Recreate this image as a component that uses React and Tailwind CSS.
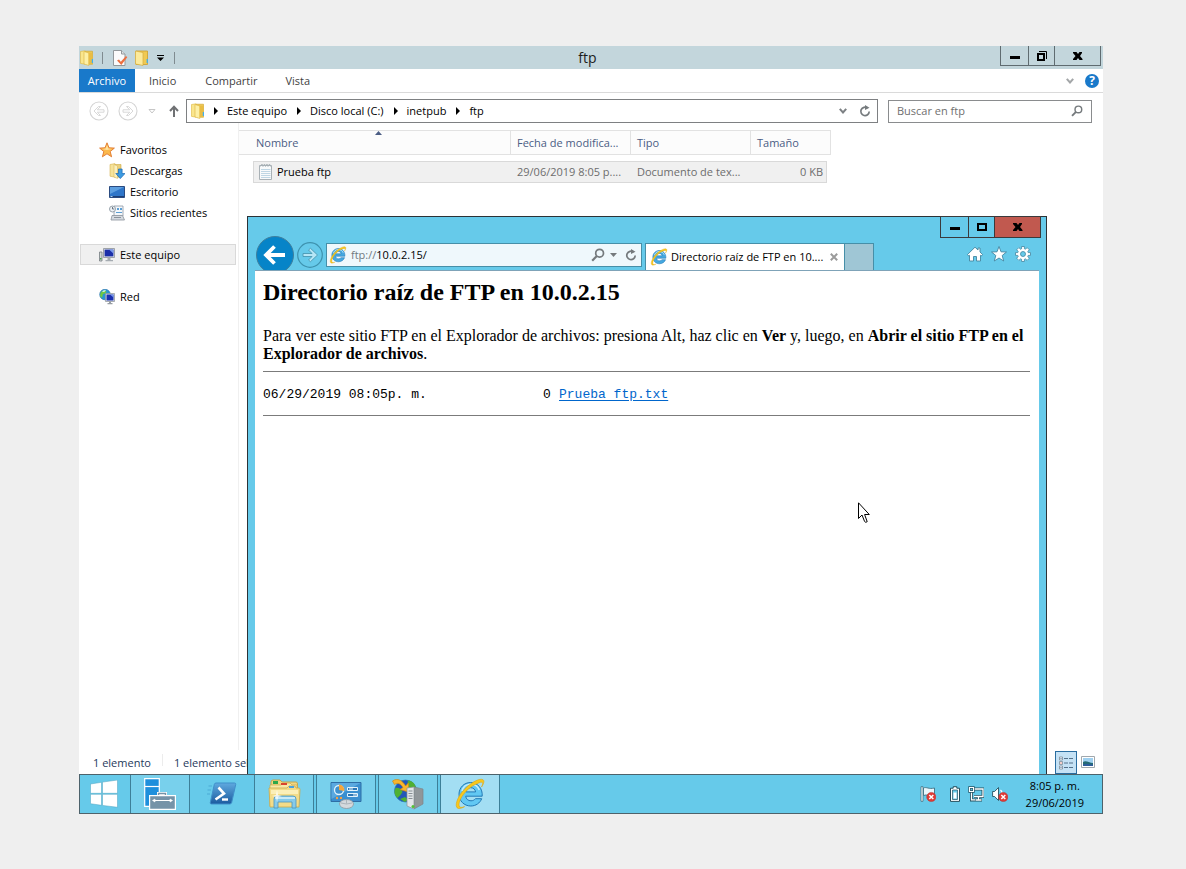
import React from "react";

function FolderIcon({ className = "h-4 w-4" }) {
  return (
    <svg viewBox="0 0 16 16" className={className} aria-hidden="true">
      <path d="M1.500 1.500 6 .8v13.400l-4.500-.8z" fill="#fae68c" stroke="#dfb73c" strokeWidth=".6" />
      <path d="M6 1.200h7.500v13H7z" fill="#eec650" stroke="#cfa42c" strokeWidth=".6" />
      <path d="M5 1.500 9.800 3v12.500L5 14z" fill="#fdf0a6" stroke="#dbb340" strokeWidth=".6" />
      <path d="M9.800 3h3.700v11.200H9.800z" fill="#e9bd45" />
      <path d="M12.800 9H14v4h-1.200z" fill="#3fb0ee" />
    </svg>
  );
}

function NewFolderIcon() {
  return (
    <svg viewBox="0 0 16 16" className="h-4 w-4" aria-hidden="true">
      <path d="M2 1h11.500v13.500H2z" fill="#f0c952" stroke="#cc9f2b" strokeWidth=".8" />
      <path d="M1.500 1 9 2.500v13L1.500 14z" fill="#fcea9a" stroke="#d6ac3c" strokeWidth=".7" />
      <path d="M12.600 9h1.300v4h-1.300z" fill="#3fb0ee" />
    </svg>
  );
}

function IEIcon({ className = "h-4 w-4", light = false }) {
  return (
    <svg viewBox="0 0 32 32" className={className} aria-hidden="true">
      <path
        d="M16.5 4.5C10 4.500 5 9.800 5 16.200 5 22.800 10 28 16.800 28c5 0 9.200-2.900 10.900-7.300h-6.300c-1 1.300-2.500 2.100-4.400 2.100-2.900 0-5-1.800-5.300-4.600h16.500c.6-7.600-4.400-13.700-11.700-13.700zM11.800 13.900c.5-2.600 2.400-4.200 4.900-4.200 2.600 0 4.500 1.600 4.900 4.200z"
        fill={light ? "#62c8f3" : "#45a8e0"}
        stroke="#2379b5"
        strokeWidth="1"
        fillRule="evenodd"
      />
      <path d="M8 13c1-4 4-6.500 8-6.800 4.500-.2 8 2.200 9.300 5.800" fill="none" stroke="#c4ecfb" strokeWidth="1.600" />
      <path
        d="M23.500 5.500c3.200-1.800 5.600-1.700 5.200.6-.2.900-.7 2-1.200 2.900 2.200-3.200 3.200-6 1.600-7.200C26.200-.3 18 3.800 11.200 10.500 4.500 17.200 1 25.500 2.600 29c1.100 2.400 4.500 1.700 8-.4-2.800 1.200-4.900 1.100-5.400-.5-1.200-3.400 2.400-10.600 8.200-16.200 3.500-3.300 7.200-5.300 10.100-6.400z"
        fill="#f8c81c"
        stroke="#dda411"
        strokeWidth=".6"
      />
    </svg>
  );
}

function StarIcon() {
  return (
    <svg viewBox="0 0 16 16" className="h-4 w-4" aria-hidden="true">
      <path d="m8 .8 2 5 5.400.3-4.200 3.400 1.400 5.300L8 11.800l-4.600 3 1.400-5.300L.6 6.100 6 5.800z" fill="#fbb94d" stroke="#e0762a" strokeWidth=".9" strokeLinejoin="round" />
      <path d="m8 3 1.300 3.600L13 7l-5 1-5-1 3.700-.4z" fill="#ffe2a0" />
    </svg>
  );
}

function DownloadsIcon() {
  return (
    <svg viewBox="0 0 16 16" className="h-4 w-4" aria-hidden="true">
      <path d="M1 1.500 6 .6v13.600l-5-1z" fill="#f6e39a" stroke="#d7b352" strokeWidth=".6" />
      <path d="M6 1.500h6v12.700H6z" fill="#ecd07a" stroke="#cda946" strokeWidth=".6" />
      <path d="M5 1.500 8.500 3v12.500L5 14z" fill="#fbf0bd" stroke="#d7b352" strokeWidth=".5" />
      <path d="M9.500 6h3.600v4.500H16L11.300 15.600 6.800 10.500h2.700z" fill="#3c9be2" stroke="#1b69b3" strokeWidth=".7" />
    </svg>
  );
}

function DesktopIcon() {
  return (
    <svg viewBox="0 0 16 16" className="h-4 w-4" aria-hidden="true">
      <path d="M.5 2.500h15v11H.5z" fill="#2f76c9" stroke="#2b4b80" />
      <path d="M1 3h14L1 10z" fill="#5d9fe0" />
      <path d="M1 12h14v1H1z" fill="#1d3f75" />
      <path d="M1.500 12h2v1h-2z" fill="#a9d1f5" />
    </svg>
  );
}

function RecentIcon() {
  return (
    <svg viewBox="0 0 16 16" className="h-4 w-4" aria-hidden="true">
      <path d="M5 1h9v10H5z" fill="#f4f7fa" stroke="#8d98a3" strokeWidth=".8" />
      <path d="M8 3h2v2H8zM11 3h2v2h-2zM7 7h6v1H7z" fill="#5c9fd4" />
      <path d="M3 10.500h10.500l2 4.500H2z" fill="#d5dae0" stroke="#8b939c" strokeWidth=".8" />
      <path d="M5 12h7v1H5z" fill="#8b939c" />
      <circle cx="3.500" cy="4" r="3" fill="#edf1f5" stroke="#8d98a3" strokeWidth=".9" />
      <path d="M3.500 2v2h1.700" fill="none" stroke="#4e5c69" strokeWidth=".8" />
    </svg>
  );
}

function ComputerIcon() {
  return (
    <svg viewBox="0 0 16 16" className="h-4 w-4" aria-hidden="true">
      <path d="M.5 5h2.500v9H.5z" fill="#d3d9d5" stroke="#737b80" strokeWidth=".8" />
      <path d="M1 11h1.500v1.500H1z" fill="#43a047" />
      <path d="M4.500 1.500h11v9h-11z" fill="#dfe3e8" stroke="#8b9097" strokeWidth=".8" />
      <path d="M5.600 2.600h8.800v6.800H5.600z" fill="#1b2fa8" />
      <path d="M10 2.600h4.400v4z" fill="#7d9ceb" />
      <path d="M8.500 10.500h3V13H14v1.300H6.500V13h2z" fill="#a5abb1" />
    </svg>
  );
}

function NetworkIcon() {
  return (
    <svg viewBox="0 0 16 16" className="h-4 w-4" aria-hidden="true">
      <circle cx="6" cy="5.500" r="5.300" fill="#2795d6" stroke="#1a68a3" strokeWidth=".6" />
      <path d="M1.500 4c2-3 5-3 6-1L6 4.500 4 5 3 9 1 7z" fill="#6fc943" />
      <path d="M3 2.500C4 1.500 6 1 7 1.500L5 3z" fill="#d6f4fa" />
      <path d="M6.500 4.500h9v8h-9z" fill="#e1e6ea" stroke="#8b9097" strokeWidth=".7" />
      <path d="M7.500 5.500h7v6h-7z" fill="#1a30b0" />
      <path d="M11 5.500h3.500v3z" fill="#7897ea" />
      <path d="M10 12.500h2V14h1.500v1.200h-5V14H10z" fill="#979da3" />
    </svg>
  );
}

function NotepadIcon() {
  return (
    <svg viewBox="0 0 16 18" className="h-[18px] w-4" aria-hidden="true">
      <path d="M1.500 2.500h12v14h-12z" fill="#f8fafb" stroke="#a9b1b6" />
      <path d="M3 6.500h9.500M3 8.500h9.500M3 10.500h9.500M3 12.500h9.500M3 14.500h9.500" stroke="#bfd6e4" />
      <path d="M2.500 3.500 4 1l1 2.500L6.500 1l1 2.500L9 1l1 2.500L11.500 1l1 2.500" fill="none" stroke="#a3acb1" strokeWidth=".8" />
    </svg>
  );
}

function MagnifierIcon({ className = "h-3 w-3" }) {
  return (
    <svg viewBox="0 0 14 14" className={className} fill="none" stroke="#757a7d" aria-hidden="true">
      <circle cx="8.600" cy="5.200" r="3.900" strokeWidth="1.700" />
      <path d="M5.800 8 1.200 12.700" strokeWidth="2.200" />
    </svg>
  );
}

function ReloadIcon({ className = "h-3 w-3" }) {
  return (
    <svg viewBox="0 0 12 12" className={className} aria-hidden="true">
      <path d="M8.500 3A4.200 4.200 0 1 0 10.200 6.500" fill="none" stroke="#757a7d" strokeWidth="1.700" />
      <path d="M6 0v5l4.500-2.200z" fill="#757a7d" />
    </svg>
  );
}

function ChevronIcon() {
  return (
    <svg viewBox="0 0 8 6" className="h-[6px] w-2" aria-hidden="true">
      <path d="m.8.800 3.200 3.700L7.200.8" fill="none" stroke="#7d8184" strokeWidth="2" />
    </svg>
  );
}

function CrumbArrow() {
  return (
    <svg viewBox="0 0 4 8" className="h-2 w-1 shrink-0" aria-hidden="true">
      <path d="M0 0v8l4-4z" fill="#000" />
    </svg>
  );
}

function NavCircle({ flip = false }) {
  return (
    <svg viewBox="0 0 20 20" className={flip ? "h-5 w-5 rotate-180" : "h-5 w-5"} fill="none" stroke="#d4d4d4" aria-hidden="true">
      <circle cx="10" cy="10" r="9" strokeWidth="1.100" />
      <path d="M5 10l4.500-4.500h2L8.300 8.800H15v2.400H8.300l3.200 3.300h-2z" strokeWidth=".9" />
    </svg>
  );
}

function MinimizeGlyph() {
  return (
    <svg viewBox="0 0 10 10" className="h-[10px] w-[10px]" aria-hidden="true">
      <path d="M0 5h10v3H0z" fill="#000" />
    </svg>
  );
}

function MaximizeGlyph() {
  return (
    <svg viewBox="0 0 10 8" className="h-2 w-[10px]" aria-hidden="true">
      <path d="M1 1h8v6H1z" fill="none" stroke="#000" strokeWidth="2" />
    </svg>
  );
}

function RestoreGlyph() {
  return (
    <svg viewBox="0 0 10 10" className="h-[10px] w-[10px]" aria-hidden="true">
      <path d="M1 3h6v6H1z" fill="none" stroke="#000" strokeWidth="2" />
      <path d="M2 .5h7.500V8" fill="none" stroke="#000" />
    </svg>
  );
}

function CloseGlyph() {
  return (
    <svg viewBox="0 0 10 8" className="h-2 w-[10px]" aria-hidden="true">
      <path d="M0 0h3.500L5 2 6.500 0H9v1L7 4l2.500 3v1H6.500L5 6 3.500 8H0V7l2.500-3L0 1z" fill="#000" />
    </svg>
  );
}

function ExplorerTitleBar() {
  return (
    <header className="flex h-[23px] bg-[#c3d6dc]">
      <div className="flex w-24 items-center">
        <FolderIcon />
        <span className="ml-[7px] h-3 w-px bg-[#7f8b90]" />
        <button aria-label="Propiedades" className="ml-[9px]">
          <svg viewBox="0 0 16 16" className="h-4 w-4" aria-hidden="true">
            <path d="M1.500.5h8l3.500 3.500v11.500H1.500z" fill="#fbfbfb" stroke="#93999c" />
            <path d="M9.500.5V4H13" fill="#e0e4e6" stroke="#93999c" />
            <path d="m5 10.500 2-1 1.800 2.300L14 6l1.300 1.200L9.300 15z" fill="#ed7040" />
          </svg>
        </button>
        <button aria-label="Nueva carpeta" className="ml-[6px]"><NewFolderIcon /></button>
        <button aria-label="Personalizar barra" className="ml-[7px]">
          <svg viewBox="0 0 7 6" className="h-[6px] w-[7px]" aria-hidden="true">
            <path d="M0 0h7v1H0zM0 2.500h7L3.500 6z" fill="#000" />
          </svg>
        </button>
        <span className="ml-[10px] h-3 w-px shrink-0 bg-[#7f8b90]" />
      </div>
      <h1 className="flex-1 text-center text-[14px] leading-[23px] text-[#1c1c1c]">ftp</h1>
      <div className="mr-[2px] flex h-5 border border-t-0 border-[#5f6b70]">
        <button aria-label="Minimizar" className="flex w-[27px] items-center justify-center"><MinimizeGlyph /></button>
        <button aria-label="Restaurar" className="flex w-[26px] items-center justify-center border-l border-[#5f6b70]"><RestoreGlyph /></button>
        <button aria-label="Cerrar" className="flex w-[46px] items-center justify-center border-l border-[#5f6b70]"><CloseGlyph /></button>
      </div>
    </header>
  );
}

function Ribbon() {
  return (
    <nav className="flex h-6 items-center border-b border-[#dadada] text-[#3f3f3f]">
      <button className="h-[23px] w-14 bg-[#1979ca] text-white">Archivo</button>
      <button className="ml-[14px]">Inicio</button>
      <button className="ml-[29px]">Compartir</button>
      <button className="ml-7">Vista</button>
      <button aria-label="Expandir cinta" className="ml-auto opacity-70"><ChevronIcon /></button>
      <button aria-label="Ayuda" className="mr-1 ml-[11px] h-[14px] w-[14px] rounded-full bg-[#1979ca] text-[12px] leading-[14px] font-bold text-white">?</button>
    </nav>
  );
}

const crumbs = ["Este equipo", "Disco local (C:)", "inetpub", "ftp"];

function AddressRow() {
  return (
    <div className="flex items-center pt-[6px] pr-[11px] pl-[10px]">
      <button aria-label="Atrás"><NavCircle /></button>
      <button aria-label="Adelante" className="ml-[9px]"><NavCircle flip /></button>
      <button aria-label="Ubicaciones recientes" className="ml-[10px]">
        <svg viewBox="0 0 8 5" className="h-[5px] w-2" aria-hidden="true"><path d="M1 .5h6L4 4z" fill="#fff" stroke="#c6c6c6" /></svg>
      </button>
      <button aria-label="Subir" className="ml-[13px]">
        <svg viewBox="0 0 10 12" className="h-3 w-[10px]" aria-hidden="true"><path d="M5 12V2M1 6l4-4.300L9 6" fill="none" stroke="#6f7173" strokeWidth="2" /></svg>
      </button>
      <div className="ml-[7px] flex h-6 min-w-0 flex-1 items-center border border-[#7e8082] pr-[6px] pl-[3px]">
        <FolderIcon />
        <ol className="ml-2 flex flex-1 items-center gap-[10px] text-black">
          {crumbs.map((crumb) => (
            <li key={crumb} className="flex items-center gap-[9px]">
              <CrumbArrow />
              <a href="#">{crumb}</a>
            </li>
          ))}
        </ol>
        <button aria-label="Historial"><ChevronIcon /></button>
        <button aria-label="Actualizar" className="ml-3"><ReloadIcon /></button>
      </div>
      <label className="ml-[10px] flex h-[23px] w-[204px] items-center border border-[#8a8c8e] px-2">
        <input type="search" aria-label="Buscar en ftp" placeholder="Buscar en ftp" className="min-w-0 flex-1 bg-transparent placeholder-[#707070] outline-none" />
        <MagnifierIcon />
      </label>
    </div>
  );
}

function TreeItem({ icon, label, child = false, selected = false }) {
  return (
    <a
      href="#"
      className={`mr-[2px] ml-px flex h-[21px] items-center gap-[5px] border ${child ? "pl-7" : "pl-[18px]"} ${selected ? "border-[#d9d9d9] bg-[#f0f0f0]" : "border-transparent"}`}
    >
      {icon}
      {label}
    </a>
  );
}

function Sidebar() {
  return (
    <aside className="flex w-40 shrink-0 flex-col gap-[21px] border-r border-[#f0f0f0] pt-4 text-black">
      <div>
        <TreeItem icon={<StarIcon />} label="Favoritos" />
        <TreeItem icon={<DownloadsIcon />} label="Descargas" child />
        <TreeItem icon={<DesktopIcon />} label="Escritorio" child />
        <TreeItem icon={<RecentIcon />} label="Sitios recientes" child />
      </div>
      <TreeItem icon={<ComputerIcon />} label="Este equipo" selected />
      <TreeItem icon={<NetworkIcon />} label="Red" />
    </aside>
  );
}

function FileTable() {
  return (
    <table className="mt-[7px] w-[592px] table-fixed border-separate border-spacing-0 self-start text-left">
      <colgroup>
        <col className="w-[14px]" />
        <col className="w-[258px]" />
        <col className="w-[120px]" />
        <col className="w-[120px]" />
        <col className="w-[76px]" />
        <col className="w-1" />
      </colgroup>
      <thead className="bg-[#fcfcfc] text-[#4b5d84]">
        <tr className="h-[25px]">
          <th colSpan={2} className="relative border-y border-r border-[#e2e2e2] pl-[17px] font-normal">
            Nombre
            <svg viewBox="0 0 7 4" className="absolute top-0 left-1/2 h-1 w-[7px]" aria-hidden="true"><path d="M0 4h7L3.500 0z" fill="#4b5d84" /></svg>
          </th>
          <th className="truncate border-y border-r border-[#e2e2e2] px-[6px] font-normal">Fecha de modifica...</th>
          <th className="border-y border-r border-[#e2e2e2] pl-[6px] font-normal">Tipo</th>
          <th colSpan={2} className="border-y border-r border-[#e2e2e2] pl-[6px] font-normal">Tamaño</th>
        </tr>
      </thead>
      <tbody className="text-[#6d6d6d] before:block before:h-[6px] before:content-['']">
        <tr className="h-[22px]">
          <td />
          <td className="border-y border-l border-[#d9d9d9] bg-[#f0f0f0] pl-1 text-black">
            <span className="flex items-center gap-[3px]"><NotepadIcon />Prueba ftp</span>
          </td>
          <td className="border-y border-[#d9d9d9] bg-[#f0f0f0] pl-[6px] whitespace-nowrap">29/06/2019 8:05 p....</td>
          <td className="border-y border-[#d9d9d9] bg-[#f0f0f0] pl-[6px] whitespace-nowrap">Documento de tex...</td>
          <td className="border-y border-r border-[#d9d9d9] bg-[#f0f0f0] pr-[3px] text-right">0 KB</td>
          <td />
        </tr>
      </tbody>
    </table>
  );
}

function StatusBar() {
  return (
    <footer className="flex h-6 items-end pl-[14px] text-[#1e395b]">
      <span className="leading-[22px]">1 elemento</span>
      <span className="mx-[11px] mb-2 h-3 w-px bg-[#ececec]" />
      <span className="leading-[22px]">1 elemento seleccionado</span>
      <button aria-label="Vista de detalles" className="ml-auto flex h-[23px] w-[22px] items-center justify-center border border-[#2a6da0] bg-[#c5e2f5]">
        <svg viewBox="0 0 16 14" className="h-[14px] w-4" aria-hidden="true">
          <path d="M1.500 1h3v3h-3zM1.500 5.500h3v3h-3zM1.500 10h3v3h-3z" fill="#fff" stroke="#7c8a95" strokeWidth=".8" />
          <path d="M2.500 2h1v1h-1zM2.500 11h1v1h-1z" fill="#3f6ba0" />
          <path d="M2.500 6.500h1v1h-1z" fill="#d03a2b" />
          <path d="M6 2.500h4M11 2.500h4M6 7h4M11 7h4M6 11.500h4M11 11.500h4" stroke="#55718a" />
        </svg>
      </button>
      <button aria-label="Vista de iconos" className="mr-2 ml-1 flex h-6 items-center">
        <svg viewBox="0 0 14 12" className="h-3 w-[14px]" aria-hidden="true">
          <path d="M.5.500h13v11H.5z" fill="#fff" stroke="#a1a8ad" />
          <path d="M2 2h10v8H2z" fill="#9fd0f0" />
          <path d="M2 6c3-2 6 1 10 1v3H2z" fill="#246a74" />
          <path d="M2 8.500c4-1 7 0 10 0V10H2z" fill="#2e5d9b" />
        </svg>
      </button>
    </footer>
  );
}

function BrowserWindow() {
  return (
    <section aria-label="Internet Explorer" className="absolute top-[170px] right-14 bottom-10 left-[168px] flex flex-col border border-b-0 border-[#2b3236] bg-[#66caea] px-[7px]">
      <div className="-mt-px -mr-[2px] flex h-[22px] self-end border border-[#3a3a3c]">
        <button aria-label="Minimizar" className="flex w-[27px] items-center justify-center"><MinimizeGlyph /></button>
        <button aria-label="Maximizar" className="flex w-[26px] items-center justify-center border-l border-[#3a3a3c]"><MaximizeGlyph /></button>
        <button aria-label="Cerrar" className="flex w-[46px] items-center justify-center border-l border-[#3a3a3c] bg-[#c1594f]"><CloseGlyph /></button>
      </div>
      <div className="flex h-8 shrink-0 items-end">
        <button aria-label="Atrás">
          <svg viewBox="0 0 40 34" className="h-[34px] w-10" aria-hidden="true">
            <circle cx="20" cy="19" r="18.500" fill="#0684c8" stroke="#3f7f9d" />
            <path d="M30 19H12M19.500 10.500 11 19l8.500 8.500" fill="none" stroke="#fff" strokeWidth="3.800" />
          </svg>
        </button>
        <button aria-label="Adelante" className="mb-[2px] ml-[2px]">
          <svg viewBox="0 0 26 26" className="h-[26px] w-[26px]" aria-hidden="true">
            <circle cx="13" cy="13" r="12.300" fill="none" stroke="#3e92ae" strokeWidth="1.200" />
            <path d="M6 11.500h9L11.500 8l2-1.700 7 6.700-7 6.700-2-1.700 3.500-3.500H6z" fill="#b5e6f6" stroke="#4a98b2" strokeWidth=".9" />
          </svg>
        </button>
        <div className="mb-[3px] ml-[3px] flex h-6 w-[316px] items-center border border-[#468fa8] bg-[#eff8fc] pr-1 pl-[2px]">
          <IEIcon className="h-[18px] w-[18px]" />
          <label htmlFor="direccion" className="ml-1 text-[#6f7a80]">ftp://</label>
          <input id="direccion" type="text" defaultValue="10.0.2.15/" className="min-w-0 flex-1 bg-transparent text-black outline-none" />
          <button aria-label="Buscar"><MagnifierIcon className="h-[14px] w-[14px]" /></button>
          <button aria-label="Opciones de búsqueda" className="ml-[5px]">
            <svg viewBox="0 0 7 4" className="h-1 w-[7px]" aria-hidden="true"><path d="M0 0h7L3.500 4z" fill="#757a7d" /></svg>
          </button>
          <button aria-label="Actualizar" className="ml-2"><ReloadIcon /></button>
        </div>
        <div className="ml-[3px] flex h-[27px] w-[200px] items-center border border-b-0 border-[#468fa8] bg-white pr-[6px] pl-[4px]">
          <IEIcon className="h-[18px] w-[18px] shrink-0" />
          <span className="ml-[3px] flex-1 whitespace-nowrap text-black">Directorio raíz de FTP en 10....</span>
          <button aria-label="Cerrar pestaña">
            <svg viewBox="0 0 8 8" className="h-2 w-2" aria-hidden="true"><path d="m.8.800 6.400 6.400M7.200.8.800 7.200" stroke="#9b9b9b" strokeWidth="2" /></svg>
          </button>
        </div>
        <button aria-label="Nueva pestaña" className="h-[27px] w-[29px] border border-b-0 border-l-0 border-[#468fa8] bg-[#9fc6d5]" />
        <div className="mr-2 mb-2 ml-auto flex gap-2">
          <button aria-label="Inicio">
            <svg viewBox="0 0 16 16" className="h-4 w-4" aria-hidden="true">
              <path d="M8 1.200 11 4V2h2v4l2.500 2.500L14.300 10l-.8-.7V15h-4v-4.500h-3V15h-4V9.300l-.8.700L.5 8.500z" fill="#fff" stroke="#4486a0" strokeWidth=".9" />
            </svg>
          </button>
          <button aria-label="Favoritos">
            <svg viewBox="0 0 16 16" className="h-4 w-4" aria-hidden="true">
              <path d="m8 .500 2 5.300 5.500.2-4.300 3.500 1.500 5.500L8 12l-4.700 3 1.500-5.500L.5 6l5.500-.2z" fill="#fff" stroke="#4486a0" strokeWidth=".9" />
            </svg>
          </button>
          <button aria-label="Herramientas">
            <svg viewBox="0 0 16 16" className="h-4 w-4" aria-hidden="true">
              <path fillRule="evenodd" d="M6.600.5h2.800v2.200l1.100.5L12.100 1.600l2.200 2.200-1.500 1.700.4 1.100h2.300v2.800h-2.300l-.4 1.100 1.500 1.700-2.200 2.200-1.600-1.500-1.100.4v2.200H6.600v-2.200l-1.100-.4-1.600 1.500-2.200-2.200 1.500-1.700-.4-1.100H.5V6.600h2.300l.4-1.100-1.500-1.700 2.200-2.200 1.600 1.600 1.100-.5zM8 5.500a2.500 2.500 0 1 0 0 5 2.500 2.500 0 0 0 0-5z" fill="#fff" stroke="#4486a0" strokeWidth=".8" />
            </svg>
          </button>
        </div>
      </div>
      <article className="flex-1 border-t border-[#7fa3b8] bg-white px-2 font-['Liberation_Serif',serif] text-[16px] leading-[18px] text-black">
        <h2 className="pt-[7px] text-[24px] leading-7 font-bold">Directorio raíz de FTP en 10.0.2.15</h2>
        <p className="mt-[21px]">
          Para ver este sitio FTP en el Explorador de archivos: presiona Alt, haz clic en <b>Ver</b> y, luego, en <b>Abrir el sitio FTP en el Explorador de archivos</b>.
        </p>
        <hr className="mt-2 mr-px border-[#7b7b7b]" />
        <div className="flex pt-[14px] pb-3 font-['Liberation_Mono',monospace] text-[13px] leading-[17px]">
          <span className="w-[280px]">06/29/2019 08:05p. m.</span>
          <span className="w-4">0</span>
          <a href="#" className="text-[#0066cc] underline underline-offset-2">Prueba ftp.txt</a>
        </div>
        <hr className="mr-px border-[#7b7b7b]" />
      </article>
    </section>
  );
}

function ServerManagerIcon() {
  return (
    <svg viewBox="0 0 32 32" className="h-8 w-8" aria-hidden="true">
      <path d="M.7.700h14.600v27.600H.7z" fill="#1e8fdc" stroke="#fff" strokeWidth="1.200" />
      <path d="M1 8.500h14" stroke="#fff" strokeWidth="1.200" />
      <path d="M14.500 17.500v-2h7v2" fill="none" stroke="#fff" strokeWidth="3" />
      <path d="M14.500 17.500v-2h7v2" fill="none" stroke="#7593a8" strokeWidth="1.400" />
      <path d="M5.600 17.600h25.800v13.800H5.600z" fill="#7593a8" stroke="#fff" strokeWidth="1.200" />
      <path d="M9 22.500h19" stroke="#fff" />
      <path d="M8.500 22.500 11 21v3zM28.500 22.500 26 21v3z" fill="#fff" stroke="#fff" strokeWidth=".6" />
    </svg>
  );
}

function PowerShellIcon() {
  return (
    <svg viewBox="0 0 32 26" className="h-[26px] w-8" aria-hidden="true">
      <defs>
        <linearGradient id="psFill" x1="0" y1="0" x2="0" y2="1">
          <stop offset="0" stopColor="#5fa9df" />
          <stop offset="1" stopColor="#1b5b9f" />
        </linearGradient>
      </defs>
      <path d="M6 5H2.500M5 9H1.500M4 13H1" stroke="#4baad5" />
      <path d="M10 2h18.500q1.500 0 1.200 1.500l-4 18q-.4 1.500-2 1.500H5.500q-1.500 0-1.200-1.500l4-18Q8.600 2 10 2z" fill="url(#psFill)" stroke="#3f8fca" />
      <path d="m12.500 6.500 5.500 6-8.500 6" fill="none" stroke="#fff" strokeWidth="2.600" />
      <path d="M16 18.500h6" stroke="#fff" strokeWidth="2.400" />
    </svg>
  );
}

function FileExplorerIcon() {
  return (
    <svg viewBox="0 0 34 30" className="h-[30px] w-[34px]" aria-hidden="true">
      <path d="M4 3q0-2 2-2h7l2 2h14q1.500 0 1.500 2v21H4z" fill="#f0d681" stroke="#c4a54b" />
      <path d="M6 2h5v3H6z" fill="#2ba84a" />
      <path d="M3 6h11l2-2h7l2 2h5v21H3z" fill="#f8e9a8" stroke="#cdae55" strokeWidth=".8" />
      <path d="M14 4h6v2h-6z" fill="#d9442f" />
      <path d="M2 9h18l2-2h6l1 2h3q1 0 1 1.500L32 28H3z" fill="#f3dc88" stroke="#c9a94d" strokeWidth=".8" />
      <path d="M22 7h5v2h-5z" fill="#4aa2de" />
      <path d="M4 11h27v4H4z" fill="#fbefb8" />
      <path d="M7 29V20q0-3 3-3h16q3 0 3 3v9h-4v-6H11v6z" fill="#86cbea" stroke="#4b94bd" strokeWidth=".8" />
      <path d="M8 19h20" stroke="#dff5fd" strokeWidth="1.500" />
      <path d="m10 11 1 5 4 1-4 1-1 5-1-5-4-1 4-1z" fill="#fff" opacity=".8" />
    </svg>
  );
}

function ControlPanelIcon() {
  return (
    <svg viewBox="0 0 34 30" className="h-[30px] w-[34px]" aria-hidden="true">
      <path d="M2 3.500h30v19H2z" fill="#3a8fd0" stroke="#2f6ea5" />
      <path d="M2.500 4h29L2.500 20z" fill="#5aa9e0" />
      <circle cx="10" cy="11" r="4.500" fill="#3f92cf" stroke="#e3f4fd" strokeWidth="1.300" />
      <path d="M10 11V5.500A5.500 5.500 0 0 1 15.200 12z" fill="#f5a53a" />
      <path d="M18.500 8.500h10v3h-10zM18.500 14.500h10v3h-10z" fill="#2c76b5" stroke="#e3f4fd" />
      <path d="M20 9.500h4v1h-4zM24 15.500h4v1h-4z" fill="#e3f4fd" />
      <circle cx="8" cy="19" r="1.200" fill="#f7a142" />
      <circle cx="12" cy="19" r="1.200" fill="#f7a142" />
      <ellipse cx="17.500" cy="25" rx="7" ry="4.500" fill="#d4d9dd" stroke="#8e989f" strokeWidth=".8" />
      <path d="M17.500 20.500v4M12 24q5.500 2 11 0" fill="none" stroke="#9ba4ab" strokeWidth=".7" />
    </svg>
  );
}

function IISIcon() {
  return (
    <svg viewBox="0 0 34 34" className="h-[34px] w-[34px]" aria-hidden="true">
      <circle cx="14.500" cy="14" r="11" fill="#2257b8" stroke="#2e7fb9" strokeWidth=".7" />
      <path d="M4.500 11c3-1 6 1 7 4l-2 3-3 3C3 18 3 14 4.500 11zM17 3.500c4 0 7 3 8 7l-5 2-4-3zM9 22l5-2 3 3-3 2z" fill="#4fb033" />
      <path d="M1.500 4c5-3.500 10-.5 13 5l3-3v9l-8.500-2.500 3-2C10 7 7 5 3.500 7.500z" fill="#f8b62d" stroke="#d18a15" strokeWidth=".7" />
      <path d="m23 10 9 2v15l-9 5z" fill="#909699" stroke="#7d8589" strokeWidth=".7" />
      <path d="m16 11 7-1v22l-7-3z" fill="#e3e6e8" stroke="#8b9296" strokeWidth=".7" />
      <path d="M17.500 14h4M17.500 16.500h4M17.500 19h4M17.500 21.500h4" stroke="#888f94" strokeWidth="1.200" />
      <circle cx="22" cy="29.500" r="1.500" fill="#4fc531" />
    </svg>
  );
}

function TaskButton({ label, children, tone }) {
  return (
    <button aria-label={label} className={`flex w-[60px] items-center justify-center border-x border-[#3d7f98] ${tone}`}>
      {children}
    </button>
  );
}

function ErrorBadge() {
  return (
    <g>
      <circle cx="11.300" cy="11" r="4.600" fill="#e03a35" stroke="#b7332f" strokeWidth=".5" />
      <path d="m9.300 9 4 4m0-4-4 4" stroke="#fff" strokeWidth="1.500" />
    </g>
  );
}

function Taskbar() {
  return (
    <footer className="flex h-10 shrink-0 border border-[#4d626b] bg-[#66caea]">
      <button aria-label="Inicio" className="flex w-[50px] items-center justify-center pr-[2px]">
        <svg viewBox="0 0 28 28" className="h-7 w-7" aria-hidden="true">
          <path d="M.5 4 11.500 2.300v11H.5zM12.500 2.100 27.500 0v13.300h-15zM.5 14.300h11v11L.5 23.700zM12.500 14.300h15v13L12.500 25.400z" fill="#fff" stroke="#4ba2c0" strokeWidth=".5" />
        </svg>
      </button>
      <TaskButton label="Administrador del servidor" tone="bg-[#78d0ec]"><ServerManagerIcon /></TaskButton>
      <button aria-label="PowerShell" className="flex w-16 items-center justify-center"><PowerShellIcon /></button>
      <div className="flex gap-[2px]">
        <TaskButton label="Explorador de archivos" tone="bg-[#78d0ec]"><FileExplorerIcon /></TaskButton>
        <TaskButton label="Panel de control" tone="bg-[#78d0ec]"><ControlPanelIcon /></TaskButton>
        <TaskButton label="Administrador de IIS" tone="bg-[#78d0ec]"><IISIcon /></TaskButton>
        <TaskButton label="Internet Explorer" tone="bg-[#a3def3]"><IEIcon className="h-8 w-8" light /></TaskButton>
      </div>
      <div className="ml-auto flex items-center">
        <svg viewBox="0 0 16 16" className="h-4 w-4" aria-hidden="true">
          <path d="M1 .700h2v14.600H1z" fill="#fff" stroke="#3f6f82" strokeWidth=".8" />
          <path d="M3.500 2c3-1.500 5 1.500 11 0v7c-5 1.500-8-1-11 .500z" fill="#eaf7fc" stroke="#3f6f82" strokeWidth=".9" />
          <ErrorBadge />
        </svg>
        <svg viewBox="0 0 10 16" className="ml-[14px] h-4 w-[10px]" aria-hidden="true">
          <path d="M3.200.700h3.600v1.500h2.700v13.200H.5V2.200h2.700z" fill="#fff" stroke="#24505f" />
          <path d="M2.500 4h5v9.500h-5z" fill="#66caea" stroke="#24505f" strokeWidth=".7" />
          <path d="M3.500 6.500h3v6h-3z" fill="#fff" />
        </svg>
        <svg viewBox="0 0 16 16" className="ml-2 h-4 w-4" fill="none" aria-hidden="true">
          <path d="M6 3h9v7.500H6M10.500 11v3M7 14h7M3.500 6v8H7" stroke="#24505f" strokeWidth="3" />
          <path d="M6 3h9v7.500H6M10.500 11v3M7.500 14h6M3.500 6v7.800H7" stroke="#fff" strokeWidth="1.300" />
          <path d="M1.500 1.500h4v4h-4z" fill="#66caea" stroke="#24505f" strokeWidth="2.400" />
          <path d="M1.500 1.500h4v4h-4z" stroke="#fff" strokeWidth="1.100" />
        </svg>
        <svg viewBox="0 0 16 16" className="ml-2 h-4 w-4" aria-hidden="true">
          <path d="M.6 5.500h2L6.500 1.500v13l-3.900-4h-2z" fill="#fff" stroke="#24505f" strokeWidth=".9" />
          <path d="M8.500 4q1.500 1.200 1.500 3" fill="none" stroke="#fff" strokeWidth="1.200" />
          <ErrorBadge />
        </svg>
        <time className="mr-[18px] ml-[18px] text-center leading-[17px] text-black" dateTime="2019-06-29T20:05">
          8:05 p. m.<br />29/06/2019
        </time>
      </div>
    </footer>
  );
}

export default function App() {
  return (
    <main className="flex min-h-screen flex-col bg-[#efefef] pt-[46px] pr-[83px] pb-[55px] pl-[79px] font-['Open_Sans','Noto_Sans',sans-serif] text-[11px] leading-4">
      <div className="relative flex flex-1 flex-col overflow-hidden bg-white">
        <section aria-label="Explorador de archivos" className="flex flex-1 flex-col">
          <ExplorerTitleBar />
          <Ribbon />
          <AddressRow />
          <div className="flex flex-1">
            <Sidebar />
            <FileTable />
          </div>
          <StatusBar />
        </section>
        <BrowserWindow />
        <Taskbar />
        <svg viewBox="0 0 12 21" className="pointer-events-none absolute top-[456px] left-[779px] h-[21px] w-3" aria-hidden="true">
          <path d="M.5.800v15.700L4 13l2.600 6.500q1 1.500 2.600.2L6.600 12.500h4.700z" fill="#fff" stroke="#000" />
        </svg>
      </div>
    </main>
  );
}
